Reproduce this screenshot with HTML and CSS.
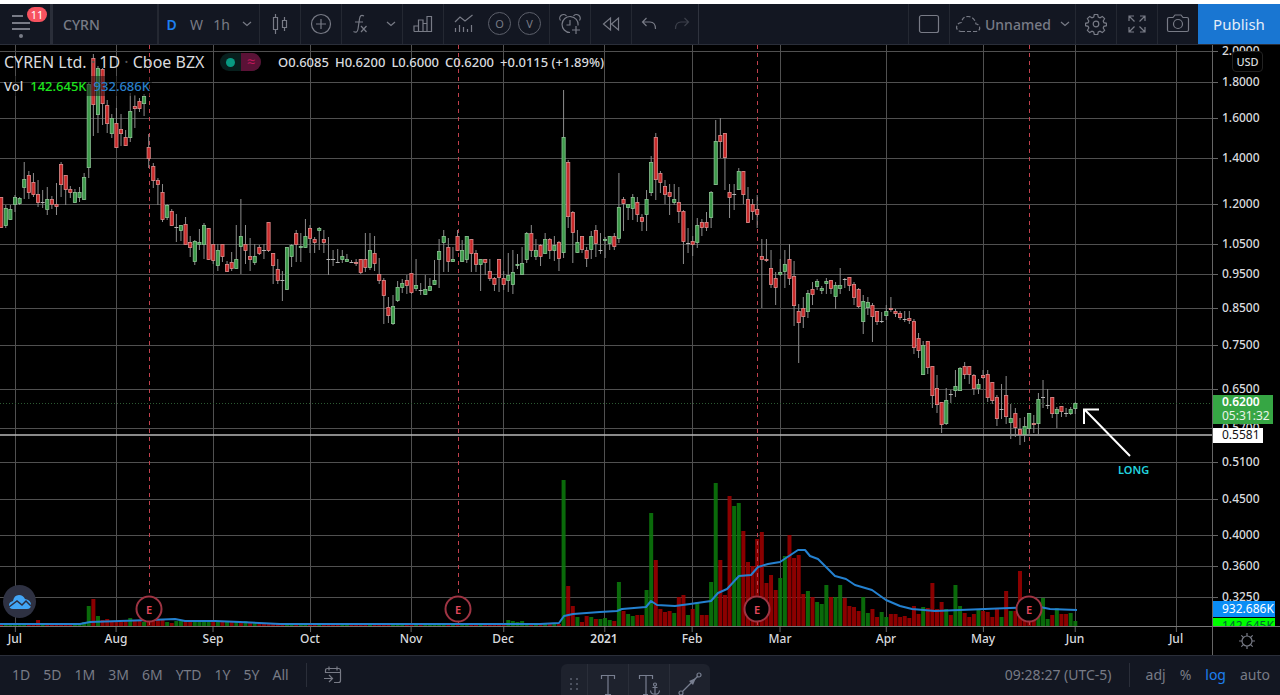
FILE: index.html
```html
<!DOCTYPE html>
<html lang="en">
<head>
<meta charset="utf-8">
<title>CYRN chart</title>
<link rel="stylesheet" href="styles.css">
</head>
<body>
<header class="toolbar">
  <button class="tool menu" aria-label="Menu">
    <svg class="icon" width="22" height="26" viewBox="0 0 22 26"><path d="M1 3h11M1 10h18M1 16h18" stroke-width="2"/><circle class="solid" cx="10" cy="23" r="2"/></svg>
    <span class="count">11</span>
  </button>
  <button class="tool symbol">CYRN</button>
  <div class="group intervals">
    <button class="tool active">D</button><button class="tool">W</button><button class="tool">1h</button>
    <button class="tool" aria-label="More intervals"><svg class="icon" width="10" height="6" viewBox="0 0 10 6"><path d="M1 1l4 3.5L9 1"/></svg></button>
  </div>
  <div class="group"><button class="tool square" aria-label="Candles"><svg class="icon" width="16" height="22" viewBox="0 0 16 22"><path d="M1.5 4.500h4v12h-4zM3.500 1v3.500M3.500 16.500V21M10.500 7.500h4v7h-4zM12.500 4v3.500M12.500 14.500V18"/></svg></button></div>
  <div class="group"><button class="tool square" aria-label="Compare"><svg class="icon" width="22" height="22" viewBox="0 0 22 22"><circle cx="11" cy="11" r="9.500"/><path d="M11 6v10M6 11h10"/></svg></button></div>
  <div class="group">
    <button class="tool wide" aria-label="Indicators"><svg class="icon" width="18" height="22" viewBox="0 0 18 22"><path d="M12 3c-3-1.500-4 0-4.500 3L6 16c-.5 3-2 4-4.500 2.500M3 9h8M9 13l5.500 6M14.500 13L9 19"/></svg></button>
    <button class="tool slim" aria-label="Indicator templates"><svg class="icon" width="10" height="6" viewBox="0 0 10 6"><path d="M1 1l4 3.500L9 1"/></svg></button>
  </div>
  <div class="group"><button class="tool square" aria-label="Financials"><svg class="icon" width="20" height="18" viewBox="0 0 20 18"><path d="M1 16.500V11h4.500v5.500M5.500 16.500V5H10v11.500M10 8.500h4v8M14 16.500v-15h4.500v15zM1 16.500h18"/></svg></button></div>
  <div class="group">
    <button class="tool scripts" aria-label="Scripts"><svg class="icon" width="20" height="20" viewBox="0 0 20 20"><path d="M1 8l5-5 5 4 7.500-6M1.500 14v4M5.500 11v7M9.500 13v5M13.500 15v3M17.500 11v7"/></svg></button>
    <button class="tool letter">O</button><button class="tool letter">V</button>
  </div>
  <div class="group"><button class="tool square" aria-label="Alert"><svg class="icon" width="22" height="22" viewBox="0 0 22 22"><path d="M11 19.500a8 8 0 1 1 8-7M1.500 7.500a3.500 3.500 0 0 1 6-4.500M20.500 7.500a3.500 3.500 0 0 0-6-4.500M11 7v5H7.500M17 13v8M13 17h8"/></svg></button></div>
  <div class="group"><button class="tool square" aria-label="Replay"><svg class="icon" width="18" height="16" viewBox="0 0 18 16"><path d="M8.500 2v12L1.500 8zM16.500 2v12L9.500 8z"/></svg></button></div>
  <div class="group full">
    <button class="tool history" aria-label="Undo"><svg class="icon" width="16" height="14" viewBox="0 0 16 14"><path d="M5.500 1L1.500 5l4 4M1.500 5H9c3.500 0 5.500 2.500 5.500 7"/></svg></button>
    <button class="tool history faded" aria-label="Redo"><svg class="icon" width="16" height="14" viewBox="0 0 16 14"><path d="M10.500 1l4 4-4 4M14.500 5H7c-3.500 0-5.500 2.500-5.500 7"/></svg></button>
  </div>
  <div class="group filler"></div>
  <div class="group"><button class="tool square" aria-label="Layout"><svg class="icon" width="22" height="20" viewBox="0 0 22 20"><rect x="1.500" y="1.500" width="19" height="17" rx="2"/></svg></button></div>
  <div class="group">
    <button class="tool layout"><svg class="icon" width="26" height="18" viewBox="0 0 26 18"><path stroke-dasharray="4 2" d="M6 16.500h15c5 0 5-7 0-7.500C20 4 17 1.500 13 1.500S7 4 6.500 7.500C0 8 0 16 6 16.500z"/></svg><span>Unnamed</span><svg class="icon" width="10" height="6" viewBox="0 0 10 6"><path d="M1 1l4 3.500L9 1"/></svg></button>
  </div>
  <div class="group"><button class="tool square" aria-label="Settings"><svg class="icon" width="22" height="22" viewBox="0 0 22 22"><path d="M9.300 1.500h3.400l.6 2.600 1.700.7 2.300-1.400 2.300 2.300-1.400 2.300.7 1.700 2.600.6v2.400l-2.600.6-.7 1.700 1.400 2.300-2.300 2.300-2.300-1.400-1.700.7-.6 2.600H9.300l-.6-2.600-1.700-.7-2.300 1.400-2.300-2.300L3.800 15l-.7-1.700-2.600-.6v-2.400l2.600-.6L3.800 8 2.400 5.700l2.300-2.300L7 4.800l1.700-.7z"/><circle cx="11" cy="11" r="2.800"/></svg></button></div>
  <div class="group"><button class="tool square" aria-label="Fullscreen"><svg class="icon" width="20" height="20" viewBox="0 0 20 20"><path d="M2 7V2h5M2 2l5.500 5.500M13 2h5v5M18 2l-5.500 5.500M2 13v5h5M2 18l5.500-5.500M18 13v5h-5M18 18l-5.500-5.500"/></svg></button></div>
  <div class="group last"><button class="tool square" aria-label="Snapshot"><svg class="icon" width="24" height="20" viewBox="0 0 24 20"><path d="M3 3.500h4l2-2.500h6l2 2.500h4q1.500 0 1.500 1.500v11q0 1.500-1.500 1.500H3q-1.500 0-1.500-1.500V5Q1.500 3.500 3 3.500z"/><circle cx="12" cy="10" r="4.500"/></svg></button></div>
  <button class="publish">Publish</button>
</header>

<main class="chart">
  <section class="plot" id="plot">
    <svg class="series" id="series" viewBox="0 0 1212 581" preserveAspectRatio="none" aria-label="CYRN daily price and volume"></svg>
    <div class="legend">
      <div class="legend-row">
        <h1 class="name">CYREN Ltd. <i>·</i> 1D <i>·</i> Cboe BZX</h1>
        <span class="status"><span class="market"></span><span class="delay">≈</span></span>
        <span class="ohlc"><span>O0.6085</span><span>H0.6200</span><span>L0.6000</span><span>C0.6200</span><span>+0.0115 (+1.89%)</span></span>
      </div>
      <div class="legend-row volume"><span>Vol</span><span class="lime">142.645K</span><span class="blue">932.686K</span></div>
    </div>
    <span class="note">LONG</span>
    <span class="brand"><svg width="24" height="16" viewBox="0 0 24 16"><path fill="#42a5f5" d="M5 15q-4 0-4-4 0-3 4-4Q6 1 11 1q4 0 6 4 6 1 6 6 0 4-4 4z"/><path fill="none" stroke="#2a2e42" stroke-width="1.500" d="M1 13l8-6 5 4 4-4 5 5"/></svg></span>
  </section>
  <aside class="prices" id="prices">
    <span class="tag last-price"><b>0.6200</b>05:31:32</span>
    <span class="tag level">0.5581</span>
    <span class="tag average">932.686K</span>
    <span class="tag current">142.645K</span>
    <button class="currency">USD</button>
  </aside>
  <div class="times" id="times"></div>
  <button class="corner" aria-label="Chart settings"><svg class="icon" width="18" height="18" viewBox="0 0 18 18"><circle cx="9" cy="9" r="5"/><path d="M9 1v3M9 14v3M1 9h3M14 9h3M3.300 3.300l2.100 2.100M12.600 12.600l2.100 2.100M3.300 14.700l2.100-2.100M12.600 5.400l2.100-2.100"/></svg></button>
</main>

<footer class="bottom">
  <nav class="ranges">
    <button>1D</button><button>5D</button><button>1M</button><button>3M</button><button>6M</button><button>YTD</button><button>1Y</button><button>5Y</button><button>All</button>
  </nav>
  <button class="goto" aria-label="Go to date"><svg class="icon" width="20" height="18" viewBox="0 0 20 18"><path d="M2.500 7V4.500q0-2 2-2h11q2 0 2 2v10q0 2-2 2H11M2.500 6.500h15M6 .5v4M14 .5v4M1 12.500h8M6 9l3.500 3.500L6 16"/></svg></button>
  <div class="modes">
    <button class="clock">09:28:27 (UTC-5)</button>
    <button>adj</button><button>%</button><button class="active">log</button><button>auto</button>
  </div>
</footer>

<div class="drawbar">
  <span class="grip"><svg width="10" height="18" viewBox="0 0 10 18" fill="#5d6270"><circle cx="2" cy="2" r="1"/><circle cx="8" cy="2" r="1"/><circle cx="2" cy="7" r="1"/><circle cx="8" cy="7" r="1"/><circle cx="2" cy="12" r="1"/><circle cx="8" cy="12" r="1"/></svg></span>
  <button aria-label="Text"><svg class="icon" width="16" height="22" viewBox="0 0 16 22"><path d="M1.500 5V1.500h13V5M8 1.500v19M5 20.500h6"/></svg></button>
  <button aria-label="Anchored text"><svg class="icon" width="22" height="22" viewBox="0 0 22 22"><path d="M1.500 5V1.500h13V5M8 1.500v19M5 20.500h5M17 12v8M14.500 13.500h5M12.500 16.500c.5 5 8.500 5 9 0"/><circle cx="17" cy="10.500" r="1.500"/></svg></button>
  <button aria-label="Trend line"><svg class="icon" width="24" height="24" viewBox="0 0 24 24"><circle cx="3" cy="21" r="2"/><circle cx="21" cy="3" r="2"/><path d="M4.500 19.500l15-15"/><path class="solid" d="M18 6l-7 3 4 4z"/></svg></button>
</div>
<script src="chart.js"></script>
</body>
</html>
```
FILE: styles.css
```css
* { box-sizing: border-box; }
body {
  margin: 0; height: 100vh; padding-top: 4px; position: relative; overflow: hidden;
  display: flex; flex-direction: column; background: #fff; color: #d8dade;
  font-family: "Noto Sans", "Open Sans", sans-serif; font-size: 13px;
}
button { background: none; border: 0; margin: 0; padding: 0; color: inherit; font: inherit; cursor: pointer; }
.icon { fill: none; stroke: currentColor; stroke-width: 1.2; flex: none; }
.solid { fill: currentColor; stroke: none; }

.toolbar { display: flex; height: 41px; flex: none; background: #131722; color: #787b86; border-bottom: 1px solid #2a2e39; font-size: 14px; }
.tool { display: flex; align-items: center; justify-content: center; height: 100%; }
.group { display: flex; border-right: 1px solid #242832; }
.group.full { border-color: #2f333e; }
.group.filler { flex: 1; }
.group.last { border: 0; }
.menu { position: relative; width: 53px; border-right: 3px solid #2a2e39; padding: 4px 6px 0 0; }
.count { position: absolute; left: 27px; top: 3px; width: 20px; height: 15px; border-radius: 8px; background: #f7525f; color: #fff; font-size: 11px; line-height: 15px; }
.symbol { width: 106px; justify-content: flex-start; padding-left: 10px; border-right: 2px solid #242832; font-weight: 500; }
.intervals .tool { width: 25px; }
.tool.active { color: #1e80f0; font-weight: 600; }
.square { width: 40px; }
.wide { width: 38px; }
.slim { width: 22px; }
.scripts { width: 40px; }
.letter { width: 23px; height: 23px; border: 1px solid #5d606b; border-radius: 50%; margin: 8px 3px 0 4px; font-size: 11px; }
.letter + .letter { margin-right: 8px; }
.history { width: 33px; }
.faded { opacity: .4; }
.layout { gap: 4px; padding: 0 5px; font-weight: 500; }
.layout span { width: 71px; text-align: left; }
.publish { width: 82px; background: #1976d2; color: #e3edf8; font-size: 15px; }

.chart { flex: 1; min-height: 0; display: grid; grid-template: 1fr 29px / 1fr 68px; background: #000; font-weight: 500; }
.plot { position: relative; overflow: hidden; }
.series { position: absolute; inset: 0; width: 100%; height: 100%; }
.legend { position: relative; padding: 7px 4px; }
.legend-row { display: flex; align-items: center; height: 20px; }
.name { margin: 0; width: 216px; font-size: 16px; font-weight: 400; white-space: nowrap; }
.name i { color: #555; font-style: normal; }
.status { display: flex; width: 41px; height: 18px; border-radius: 9px; overflow: hidden; background: #071f1d; }
.market { width: 9px; height: 9px; border-radius: 50%; background: #089981; margin: 5px 6px; }
.delay { flex: 1; background: #5a1236; color: #c2185b; text-align: center; line-height: 17px; font-size: 15px; }
.ohlc { display: flex; gap: 6px; margin-left: 17px; white-space: nowrap; }
.volume { width: 148px; margin-top: 4px; gap: 7px; background: rgb(0 0 0 / 45%); }
.lime { color: #1ee61e; }
.blue { color: #2a80cc; }
.note { position: absolute; left: 92.25%; top: 71.700%; font-size: 11px; font-weight: 600; color: #22d3df; }
.brand { position: absolute; left: 3px; bottom: 8px; width: 33px; height: 33px; border-radius: 50%; background: #2e3142; display: grid; place-items: center; }
.event { position: absolute; top: 97.100%; width: 27px; height: 27px; transform: translate(-50%, -50%); border: 2px solid #9e3443; border-radius: 50%; background: #000; color: #e0475a; font-size: 11px; font-weight: 600; line-height: 23px; text-align: center; }

.prices { position: relative; overflow: hidden; border-left: 1px solid #666; font-size: 12px; }
.price { position: absolute; left: 9px; line-height: 16px; transform: translateY(-50%); }
.price::before { content: ""; position: absolute; left: -9px; top: 8px; width: 5px; height: 1px; background: #666; }
.tag { position: absolute; left: 0; padding-left: 9px; line-height: 14px; font-weight: 400; }
.last-price { top: 60.200%; width: 60px; height: 29px; background: #36a644; color: #e8f5e9; z-index: 1; }
.last-price b { display: block; color: #fff; font-weight: 600; }
.level { top: 65.900%; width: 50px; height: 15px; background: #fff; color: #111; z-index: 1; }
.average { top: 95.700%; width: 62px; height: 16px; line-height: 16px; background: #0a8df5; color: #fff; z-index: 2; }
.current { top: 98.600%; width: 62px; height: 16px; background: #0f0; color: #063; line-height: 16px; z-index: 1; }
.currency { position: absolute; left: 19px; top: 6px; width: 31px; height: 21px; border: 1px solid #222; border-radius: 4px; background: #000; font-size: 11px; z-index: 1; }
.times { position: relative; border-top: 1px solid #777; font-size: 12px; overflow: hidden; }
.time { position: absolute; top: 4px; line-height: 16px; transform: translateX(-50%); }
.time::before { content: ""; position: absolute; left: 50%; top: -4px; width: 1px; height: 5px; background: #666; }
.time.year { font-weight: 600; }
.corner { display: grid; place-items: center; border-top: 1px solid #777; border-left: 1px solid #666; color: #787b86; }

.bottom { display: flex; align-items: center; height: 40px; flex: none; padding: 0 10px 2px 12px; background: #131722; border-top: 1px solid #2a2e39; color: #787b86; font-size: 14px; }
.ranges { display: flex; gap: 13px; padding-right: 17px; border-right: 1px solid #2a2e39; line-height: 24px; }
.goto { margin-left: 16px; display: flex; }
.modes { display: flex; gap: 14px; margin-left: auto; line-height: 24px; }
.clock { padding-right: 17px; border-right: 1px solid #2a2e39; margin-right: 2px; }
.modes .active { color: #1e80f0; }

.drawbar { position: absolute; bottom: 0; left: 561px; height: 31px; display: flex; overflow: hidden; border-radius: 6px 6px 0 0; background: #1e222d; color: #787f90; }
.drawbar > * { width: 41px; padding-top: 10px; display: flex; justify-content: center; align-items: flex-start; border-left: 1px solid #2a2e39; }
.drawbar .grip { width: 26px; border: 0; padding-top: 13px; }
.drawbar button:last-child { padding-top: 8px; }
```
FILE: chart.js
```js
const WIDTH = 1212, HEIGHT = 581, TOP = 45, BASE = 626, FIRST_X = 15, STEP = 4.61, FIRST_DAY = -3;

// One session per entry: direction (g up, r down, d unchanged), high, body top, body bottom, low.
const candles = `
r197,197,228,228 g205,208,226,228 g205,209,220,220 g195,197,205,212 g197,198,204,205 g162,179,188,199 r171,175,193,199 r173,182,195,197
r180,194,203,207 d190,202,203,208 g187,199,210,215 r196,199,205,209 r183,204,207,215 r162,164,185,197 r175,175,190,205 r186,189,193,198
g189,192,203,203 g187,192,198,202 g173,177,200,200 g82,84,168,178 r54,58,105,136 g66,68,115,133 r68,69,104,125 r100,105,124,133
g114,118,134,138 r108,123,148,148 r114,129,134,146 r130,137,146,146 g93,111,138,142 r95,106,109,128 r98,101,109,112 g94,96,104,116
r134,147,159,168 r163,166,181,188 r178,180,185,205 r184,192,220,222 g204,205,218,220 r209,211,226,226 d214,227,228,242 g225,225,231,241
r217,224,245,245 r236,242,248,257 g240,241,262,265 g229,242,245,250 g223,225,245,259 r228,228,260,260 r244,244,261,264 g244,250,266,271
r244,244,257,262 r261,264,272,272 r252,262,269,271 g225,259,269,269 g199,236,247,274 r225,244,251,264 r238,256,260,271 g244,256,263,265
r245,247,254,255 d244,250,251,259 r222,222,251,252 r253,253,266,284 r259,269,281,284 d271,280,281,301 g247,247,290,290 g244,245,257,267
r230,233,245,262 g233,246,248,262 g219,236,248,248 r225,228,239,253 r237,239,243,253 g227,228,231,250 r230,239,243,253 d237,259,260,275
d250,259,261,266 d249,262,263,263 g250,256,260,263 g254,259,262,262 d260,262,263,263 r259,262,264,266 r259,259,273,274 r233,259,268,272
g233,250,268,270 r236,253,264,271 r258,274,281,284 r278,280,296,324 r297,307,316,323 g295,306,324,325 g281,287,301,302 g279,283,288,293
r275,280,286,294 r273,273,293,294 g259,285,289,291 d283,290,291,295 g275,289,295,295 g278,286,291,291 g260,280,285,285 g239,251,260,288
g230,236,243,272 r238,247,262,272 g247,259,262,262 r230,236,251,251 g240,250,262,262 g236,236,260,263 r239,239,254,272 r250,253,265,272
g259,259,265,291 r259,259,263,275 r259,271,279,281 r277,278,285,291 r259,259,278,292 r271,278,285,290 g253,275,281,292 g250,272,285,294
g254,264,266,269 g247,263,275,275 g232,233,260,263 r225,233,251,257 g239,250,257,260 r244,245,257,266 g233,239,254,254 r238,239,251,259
g236,245,251,261 r241,242,259,271 g90,137,253,258 r160,162,217,228 r211,212,233,263 g230,242,253,253 r236,236,250,253 r247,250,259,267
g231,236,250,259 r225,230,244,257 d233,250,251,254 g237,239,241,258 g236,236,244,250 r233,236,247,250 g173,207,239,243 r197,199,204,231
g204,204,208,220 g194,197,209,220 r197,202,215,222 r214,217,222,231 g190,199,215,231 g156,162,193,196 r133,137,180,200 r171,173,183,193
r180,186,195,204 r184,192,197,215 g184,199,203,205 r187,202,212,223 r210,211,242,264 d228,243,244,253 r236,241,245,256 g218,225,243,248
r219,222,228,236 r212,222,228,231 g191,192,218,228 g120,141,185,185 r118,135,142,158 r133,133,158,190 r184,192,198,218 d184,194,195,210
g168,171,190,190 r171,171,195,204 r187,199,223,223 r199,204,212,220 r195,209,215,228 r239,256,260,308 r239,259,261,262 r250,268,285,288
r272,278,288,305 g259,272,275,276 g250,264,272,288 r244,259,279,285 r261,276,306,326 r304,311,323,363 r297,308,317,328 g290,293,312,318
r282,289,295,305 g279,281,287,290 g286,288,291,294 g278,281,284,294 r280,280,289,294 g282,285,297,309 g268,285,289,294 d278,279,281,288
r277,277,286,291 r282,284,298,305 r288,289,307,308 g295,301,322,334 g297,302,308,315 r303,305,317,342 r311,311,322,325 d312,321,323,323
g305,311,316,320 r297,308,310,312 r309,311,314,317 r311,313,318,320 d311,319,320,322 r311,318,321,324 r319,321,348,354 r333,338,351,358
g341,345,375,375 r341,341,368,374 r366,366,396,408 r375,388,405,413 r402,402,425,433 g388,400,424,425 d390,394,395,403 g370,386,391,397
g367,368,391,391 r362,366,375,379 r366,366,375,384 r374,375,389,395 g379,384,389,394 r370,375,378,379 r370,374,398,402 r382,382,401,404
r395,397,419,426 d384,409,410,419 r376,395,417,424 g404,418,423,439 r408,413,428,437 r418,429,435,445 g417,426,435,442 g413,413,429,436
r415,423,425,433 g393,399,424,434 d380,397,399,408 d389,405,407,409 r397,397,414,418 g407,409,414,428 r406,406,412,417 d408,413,414,417
g407,409,414,415 g402,403,409,414`.trim().split(/\s+/);

// Volume bars by starting session; sessions outside these runs are nearly flat.
const volume = {
  5: 'r620 g623 r624',
  15: 'g622 g606 r599 g616 r620 r619 r621 r621 r622 r621 g618 r621 r621 g622 r615 r619 r619 r620 g622 r623 g621 g621 r622 r622 g621 g621 g621 g621 r620 g622 r621 g622 r622 g622 r622 g621 r622 g622',
  107: 'g620 g621 g622 g621',
  119: 'g480 r586 r606 g617 r622 r616 g617 r619 g619 g618 g620 r621 g582 r611 g614 g616 r615 r615 g590 g513 r560 r609 r612 r611 g613 r597 r595 g615 r609 g602 r615 r615 g582 g483 r560 r595 r496 g506 g503 r531 r562 r566 r539 r532 r583 r575 r590 g578 g556 r535 r558 r555 r594 g591 r597 g602 g604 g585 r597 g597 g585 r598 r606 r607 r611 g597 g613 r609 r617 g612 g617 r614 r614 r617 r616 r618 r606 r614 g607 r608 r583 r609 r602 g609 r615 g585 g606 r613 r617 r614 g610 r611 r612 r617 r609 g617 r591 g611 r611 r571 r608 r606 r618 g610 g598 g619 r615 g608 r614 r614 g613 g621'
};
const average = [[0,624],[80,624],[90,622],[120,621],[150,620],[175,619],[185,621],[215,621],[240,622],[280,624],[540,624],[559,623],[564,616],[573,614],[600,612],[617,611],[622,609],[646,607],[651,601],[657,605],[675,606],[690,604],[711,601],[718,593],[727,589],[739,576],[751,575],[758,567],[768,564],[780,562],[798,550],[805,550],[810,556],[818,559],[835,576],[846,579],[855,585],[872,590],[886,600],[900,606],[912,609],[935,611],[960,610],[985,609],[1010,608],[1040,607],[1050,609],[1077,610]];
const prices = [['2.0000',51],['1.8000',82],['1.6000',118],['1.4000',158],['1.2000',204],['1.0500',244],['0.9500',274],['0.8500',308],['0.7500',345],['0.6500',389],['0.5700',428],['0.5100',462],['0.4500',499],['0.4000',535],['0.3600',566],['0.3250',597]];
const months = [['Jul',15],['Aug',116],['Sep',213],['Oct',310],['Nov',411],['Dec',503],['2021',604],['Feb',692],['Mar',780],['Apr',886],['May',983],['Jun',1075],['Jul',1176]];
const earnings = [149, 458, 757, 1029];

const x = day => FIRST_X + day * STEP;
const y = v => v - TOP;
const line = (x1, y1, x2, y2, stroke, extra = '') => `<line x1="${x1}" y1="${y1}" x2="${x2}" y2="${y2}" stroke="${stroke}" ${extra}/>`;
let out = '';

prices.forEach(([, py]) => { out += line(0, y(py) + .5, WIDTH, y(py) + .5, '#505050'); });
months.forEach(([, mx]) => { out += line(mx + .5, 0, mx + .5, HEIGHT, '#505050'); });

const bar = (day, dir, top) => `<rect x="${x(day) - 2}" y="${y(top)}" width="4" height="${BASE - top}" fill="${dir === 'g' ? '#0b7a0b' : '#a00000'}" fill-opacity=".87"/>`;
const drawn = new Set();
Object.entries(volume).forEach(([start, run]) => run.split(' ').forEach((v, i) => {
  drawn.add(+start + i);
  out += bar(+start + i, v[0], +v.slice(1));
}));
candles.forEach((c, i) => { if (!drawn.has(i + FIRST_DAY)) out += bar(i + FIRST_DAY, c[0], 624); });

earnings.forEach(ex => { out += line(ex + .5, 0, ex + .5, HEIGHT, '#c0404c', 'stroke-dasharray="4 4"'); });
out += line(0, y(403) + .5, WIDTH, y(403) + .5, '#2c5a32', 'stroke-dasharray="1 2"');
out += line(0, y(435), WIDTH, y(435), '#b8b8b8', 'stroke-width="1.4"');

candles.forEach((c, i) => {
  const cx = x(i + FIRST_DAY);
  const [high, top, bottom, low] = c.slice(1).split(',').map(Number);
  out += line(cx, y(high), cx, y(low), '#8c8c8c');
  if (c[0] === 'd') {
    out += line(cx - 2, y(top) + .5, cx + 2, y(top) + .5, '#b5b5b5');
  } else {
    const [fill, edge] = c[0] === 'g' ? ['#3d9a4a', '#8cc394'] : ['#c92a2a', '#dc8e8e'];
    out += `<rect x="${cx - 1.6}" y="${y(top) + .4}" width="3.2" height="${Math.max(1, bottom - top - .8)}" fill="${fill}" stroke="${edge}" stroke-width=".8"/>`;
  }
});
out += `<polyline points="${average.map(([ax, ay]) => ax + ',' + y(ay)).join(' ')}" fill="none" stroke="#2481d0" stroke-width="2" stroke-linejoin="round"/>`;
out += `<path d="M1130 411L1085 365M1084 379V364.500H1099" fill="none" stroke="#fff" stroke-width="2"/>`;
document.getElementById('series').innerHTML = out;

function label(parent, className, text, side, percent) {
  const el = document.createElement('span');
  el.className = className;
  el.textContent = text;
  el.style[side] = percent + '%';
  document.getElementById(parent).append(el);
}
prices.forEach(([text, py]) => label('prices', 'price', text, 'top', y(py) / HEIGHT * 100));
months.forEach(([text, mx]) => label('times', text === '2021' ? 'time year' : 'time', text, 'left', mx / WIDTH * 100));
earnings.forEach(ex => label('plot', 'event', 'E', 'left', ex / WIDTH * 100));
```
